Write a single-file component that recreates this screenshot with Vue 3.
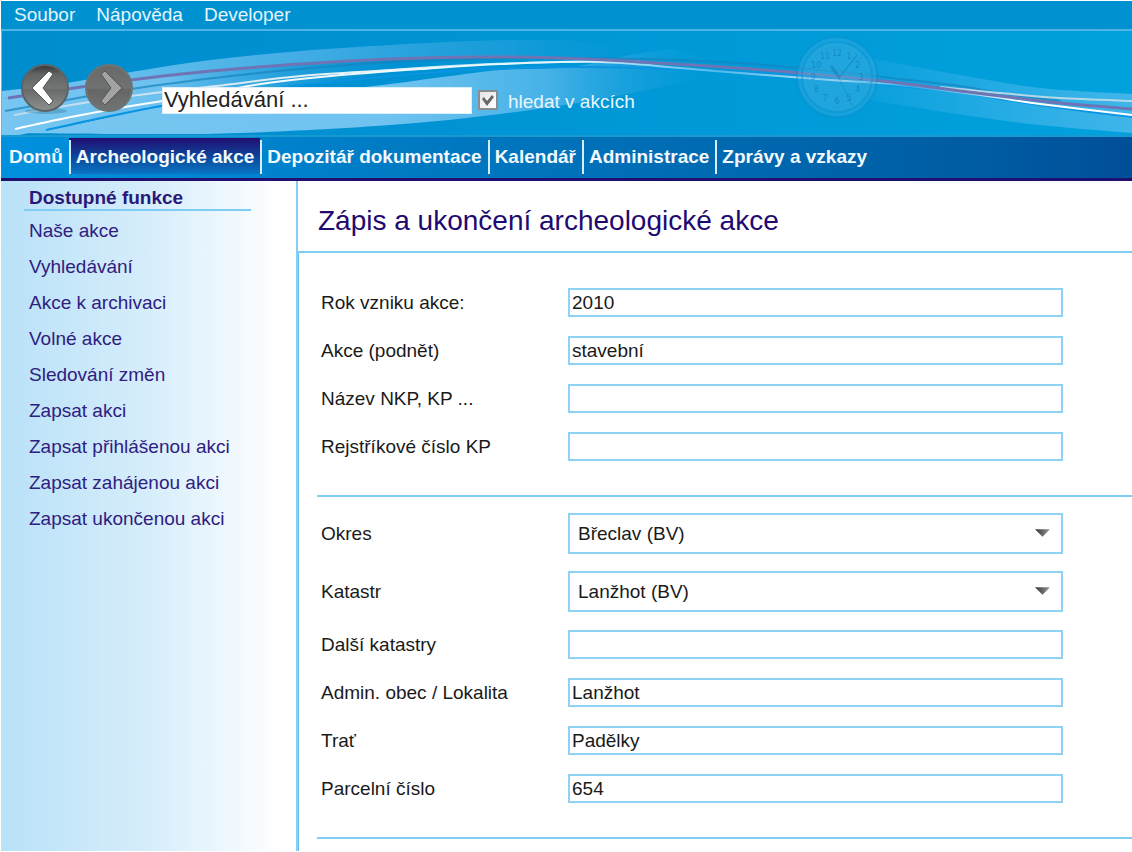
<script setup>
import { ref } from 'vue'

const menu = ['Soubor', 'Nápověda', 'Developer']

const tabs = [
  'Domů',
  'Archeologické akce',
  'Depozitář dokumentace',
  'Kalendář',
  'Administrace',
  'Zprávy a vzkazy',
]
const activeTab = ref('Archeologické akce')

const functions = [
  'Naše akce',
  'Vyhledávání',
  'Akce k archivaci',
  'Volné akce',
  'Sledování změn',
  'Zapsat akci',
  'Zapsat přihlášenou akci',
  'Zapsat zahájenou akci',
  'Zapsat ukončenou akci',
]

const search = ref('Vyhledávání ...')
const searchInEvents = ref(true)

const sections = ref([
  [
    { id: 'rok', label: 'Rok vzniku akce:', value: '2010' },
    { id: 'podnet', label: 'Akce (podnět)', value: 'stavební' },
    { id: 'nazev', label: 'Název NKP, KP ...', value: '' },
    { id: 'rejstrik', label: 'Rejstříkové číslo KP', value: '' },
  ],
  [
    { id: 'okres', label: 'Okres', value: 'Břeclav (BV)', select: true },
    { id: 'katastr', label: 'Katastr', value: 'Lanžhot (BV)', select: true },
    { id: 'dalsi', label: 'Další katastry', value: '' },
    { id: 'obec', label: 'Admin. obec / Lokalita', value: 'Lanžhot' },
    { id: 'trat', label: 'Trať', value: 'Padělky' },
    { id: 'parcela', label: 'Parcelní číslo', value: '654' },
  ],
])

// Smooth curve through a list of points (Catmull-Rom turned into cubic Béziers).
function curve(p, start = 'M') {
  let d = `${start}${p[0][0]} ${p[0][1]}`
  for (let i = 0; i < p.length - 1; i++) {
    const a = p[i - 1] || p[i]
    const b = p[i]
    const c = p[i + 1]
    const e = p[i + 2] || c
    const n = (v) => v.toFixed(1)
    d += `C${n(b[0] + (c[0] - a[0]) / 6)} ${n(b[1] + (c[1] - a[1]) / 6)} ${n(c[0] - (e[0] - b[0]) / 6)} ${n(c[1] - (e[1] - b[1]) / 6)} ${c[0]} ${c[1]}`
  }
  return d
}
const band = (top, bottom) => curve(top) + curve([...bottom].reverse(), 'L') + 'Z'

const purplePts = [[7, 98], [60, 90], [130, 80], [210, 71], [300, 64], [390, 59], [470, 57], [560, 58], [640, 62], [752, 69], [832, 76], [900, 83], [960, 91], [1000, 96], [1060, 103], [1132, 109]]
const bluePts = [[45, 130], [100, 118], [160, 106], [220, 96], [300, 85], [390, 76], [480, 69], [570, 67], [640, 68], [720, 71], [800, 76], [880, 84], [960, 92], [1000, 99], [1060, 108], [1132, 117]]

const purple = curve(purplePts)
const blue = curve(bluePts)
const navy = curve([[4, 111], [60, 101], [130, 89], [230, 76], [310, 68], [390, 62], [480, 59], [560, 58], [640, 59], [700, 61], [752, 64], [830, 71], [900, 79], [960, 86], [1000, 93], [1060, 101]])
const cream = curve([[13, 115], [70, 105], [130, 96], [215, 86], [300, 76], [390, 70], [450, 66], [520, 63], [600, 61], [640, 61]])
const creamRight = curve([[940, 87], [1000, 93], [1060, 98], [1132, 101]])
const white = curve([[14, 129], [70, 117], [130, 106], [200, 95], [260, 84], [330, 76], [420, 69], [500, 64], [600, 62], [680, 68], [752, 74], [830, 80], [890, 84], [980, 95], [1040, 104], [1132, 115]])
const upperBand = band(
  [[1, 91], [60, 84], [130, 72], [210, 60], [300, 51], [390, 45], [470, 41], [540, 40], [640, 43]],
  [[1, 99], [60, 90], [130, 80], [210, 71], [300, 64], [390, 59], [470, 57], [560, 58], [640, 62]],
)
const innerBand = band(
  [[1, 99], [60, 90], [130, 80], [210, 71], [300, 64], [390, 59], [400, 59]],
  [[1, 138], [45, 130], [100, 118], [160, 106], [220, 96], [300, 85], [390, 72], [400, 70]],
)
const lowerBand = band(
  [[1, 130], [45, 130], [100, 119], [160, 107], [250, 98], [320, 92], [390, 84], [450, 76], [500, 70], [570, 67], [630, 55], [670, 49]],
  [[1, 133], [130, 134], [240, 133], [390, 125], [500, 114], [600, 99], [680, 83], [750, 66]],
)
const rightBand = band(
  [[870, 58], [960, 75], [1040, 88], [1132, 94]],
  [[870, 100], [950, 113], [1040, 125], [1132, 133]],
)

const dial = Array.from({ length: 12 }, (_, i) => {
  const t = ((i + 1) * Math.PI) / 6
  return { n: i + 1, x: 41 + 24 * Math.sin(t), y: 42 - 24 * Math.cos(t) }
})
</script>

<template>
  <div class="app">
    <header>
      <nav class="menubar" aria-label="Menu">
        <a v-for="item in menu" :key="item" href="#">{{ item }}</a>
      </nav>

      <div class="banner">
        <svg class="waves" viewBox="1 31 1131 104" preserveAspectRatio="none" aria-hidden="true">
          <defs>
            <linearGradient id="fadeUpper" gradientUnits="userSpaceOnUse" x1="1" x2="640" y1="0" y2="0">
              <stop offset="0" stop-color="#78c6f1" />
              <stop offset="0.2" stop-color="#62bdec" />
              <stop offset="0.5" stop-color="#3eabe3" />
              <stop offset="0.8" stop-color="#1e9fdb" stop-opacity="0.7" />
              <stop offset="1" stop-color="#0e9ad8" stop-opacity="0" />
            </linearGradient>
            <linearGradient id="fadeInner" gradientUnits="userSpaceOnUse" x1="1" x2="400" y1="0" y2="0">
              <stop offset="0" stop-color="#78c6f1" />
              <stop offset="0.4" stop-color="#6dc1ef" />
              <stop offset="1" stop-color="#2aa2df" stop-opacity="0" />
            </linearGradient>
            <linearGradient id="fadeLower" gradientUnits="userSpaceOnUse" x1="1" x2="700" y1="0" y2="0">
              <stop offset="0" stop-color="#78c6f1" />
              <stop offset="0.55" stop-color="#70c3f0" />
              <stop offset="0.78" stop-color="#46b2e7" />
              <stop offset="1" stop-color="#1ea3de" stop-opacity="0" />
            </linearGradient>
            <linearGradient id="fadeRight" gradientUnits="userSpaceOnUse" x1="870" x2="1132" y1="0" y2="0">
              <stop offset="0" stop-color="#40b5ea" stop-opacity="0.15" />
              <stop offset="1" stop-color="#40b5ea" />
            </linearGradient>
            <linearGradient id="creamFade" gradientUnits="userSpaceOnUse" x1="13" x2="640" y1="0" y2="0">
              <stop offset="0" stop-color="#b9dcef" />
              <stop offset="0.6" stop-color="#eef3f4" />
              <stop offset="1" stop-color="#cfe9f8" stop-opacity="0.3" />
            </linearGradient>
            <linearGradient id="whiteFade" gradientUnits="userSpaceOnUse" x1="14" x2="1132" y1="0" y2="0">
              <stop offset="0" stop-color="#fff" />
              <stop offset="0.5" stop-color="#e2f5ff" />
              <stop offset="0.63" stop-color="#9fdcf8" stop-opacity="0.5" />
              <stop offset="0.74" stop-color="#d5e9f5" />
              <stop offset="0.8" stop-color="#9fdcf8" stop-opacity="0.3" />
              <stop offset="0.9" stop-color="#fff" />
              <stop offset="1" stop-color="#fff" />
            </linearGradient>
          </defs>
          <path :d="upperBand" fill="url(#fadeUpper)" />
          <path :d="innerBand" fill="url(#fadeInner)" />
          <path :d="lowerBand" fill="url(#fadeLower)" />
          <path :d="rightBand" fill="url(#fadeRight)" />
          <g fill="none">
            <path :d="navy" stroke="#1583bd" stroke-width="2" opacity="0.7" />
            <path :d="blue" stroke="#0a95e2" stroke-width="2" />
            <path :d="cream" stroke="url(#creamFade)" stroke-width="2" />
            <path :d="creamRight" stroke="#b5d8e6" stroke-width="2" />
            <path :d="white" stroke="url(#whiteFade)" stroke-width="2" />
            <path :d="purple" stroke="#6f74b4" stroke-width="3" />
          </g>
        </svg>

        <svg class="clock" viewBox="0 0 82 84" aria-hidden="true">
          <circle cx="41" cy="42" r="40" fill="#49b3e6" fill-opacity="0.3" stroke="#0a86c6" stroke-opacity="0.35" stroke-width="2" />
          <circle cx="41" cy="42" r="35" fill="#49b3e6" fill-opacity="0.2" stroke="#0a86c6" stroke-opacity="0.35" stroke-width="2" />
          <circle cx="41" cy="42" r="30" fill="none" stroke="#0a86c6" stroke-opacity="0.25" stroke-dasharray="1 2" />
          <text v-for="d in dial" :key="d.n" :x="d.x" :y="d.y + 3">{{ d.n }}</text>
          <path d="M43 43 61 20" stroke="#0870aa" stroke-opacity="0.6" stroke-width="1" />
          <path d="M43 42 35 31" stroke="#0870aa" stroke-opacity="0.35" stroke-width="3" />
          <path d="M43 43 56 71" stroke="#0870aa" stroke-opacity="0.3" stroke-width="1" />
        </svg>

        <div class="history">
          <button type="button" aria-label="Zpět">
            <svg viewBox="0 0 48 52" aria-hidden="true">
              <defs>
                <linearGradient id="ball" x1="0" x2="0" y1="0" y2="1">
                  <stop offset="0" stop-color="#333" />
                  <stop offset="0.2" stop-color="#626463" />
                  <stop offset="0.5" stop-color="#747675" />
                  <stop offset="0.54" stop-color="#696b6a" />
                  <stop offset="1" stop-color="#8f9190" />
                </linearGradient>
              </defs>
              <ellipse cx="25" cy="47" rx="21" ry="3" fill="#357ca0" opacity="0.4" />
              <circle cx="24" cy="24" r="23" fill="url(#ball)" stroke="#5c6468" stroke-width="2" />
              <path d="M28 7 32 10 22 24 32 37 28 41 11 24Z" fill="#fff" stroke="#555" stroke-width="1" stroke-linejoin="round" />
            </svg>
          </button>
          <button type="button" aria-label="Vpřed">
            <svg viewBox="0 0 48 52" aria-hidden="true">
              <defs>
                <linearGradient id="ballDim" x1="0" x2="0" y1="0" y2="1">
                  <stop offset="0" stop-color="#676969" />
                  <stop offset="0.5" stop-color="#707271" />
                  <stop offset="0.54" stop-color="#656766" />
                  <stop offset="1" stop-color="#727473" />
                </linearGradient>
              </defs>
              <circle cx="24" cy="24" r="23" fill="url(#ballDim)" stroke="#6c7476" stroke-width="2" />
              <path d="M20 7 16 10 26 24 16 37 20 41 37 24Z" fill="#a3a3a3" stroke="#555" stroke-width="1" stroke-linejoin="round" />
            </svg>
          </button>
        </div>

        <form class="search" @submit.prevent>
          <input v-model="search" type="text" class="query" aria-label="Vyhledávání" />
          <label class="check">
            <span class="tick">
              <input v-model="searchInEvents" type="checkbox" />
              <svg v-if="searchInEvents" viewBox="0 0 20 20" aria-hidden="true">
                <path d="M4 9 6 7 9 11 14 5 16 7 9 16Z" fill="#666" />
              </svg>
            </span>
            <span class="caption">hledat v akcích</span>
          </label>
        </form>
      </div>

      <nav class="tabs" aria-label="Hlavní navigace">
        <a
          v-for="tab in tabs"
          :key="tab"
          href="#"
          :class="{ active: tab === activeTab }"
          @click.prevent="activeTab = tab"
        >{{ tab }}</a>
      </nav>
    </header>

    <div class="body">
      <aside>
        <h2>Dostupné funkce</h2>
        <ul>
          <li v-for="item in functions" :key="item"><a href="#">{{ item }}</a></li>
        </ul>
      </aside>

      <main>
        <h1>Zápis a ukončení archeologické akce</h1>
        <form class="sheet" @submit.prevent>
          <section v-for="(fields, i) in sections" :key="i">
            <div v-for="field in fields" :key="field.id" class="row">
              <label :for="field.id">{{ field.label }}</label>
              <span v-if="field.select" class="select">
                <select :id="field.id" v-model="field.value">
                  <option>{{ field.value }}</option>
                </select>
                <svg viewBox="0 0 16 8" aria-hidden="true">
                  <defs>
                    <linearGradient id="arrow" x1="0" x2="1" y1="0" y2="0">
                      <stop offset="0" stop-color="#333" />
                      <stop offset="1" stop-color="#999" />
                    </linearGradient>
                  </defs>
                  <path d="M0 0H16L8 8Z" fill="url(#arrow)" />
                </svg>
              </span>
              <input v-else :id="field.id" v-model="field.value" type="text" />
            </div>
          </section>
        </form>
      </main>
    </div>
  </div>
</template>

<style>
body {
  background: #fff;
}
</style>

<style scoped>
.app {
  display: flex;
  flex-direction: column;
  box-sizing: border-box;
  min-height: 100vh;
  padding: 1px 0 1px 1px;
  background: #fff;
  color: #1a1a1a;
  font-family: "Liberation Sans", Arial, sans-serif;
  font-size: 19px;
}
a {
  color: inherit;
  text-decoration: none;
}
input,
select {
  box-sizing: border-box;
  margin: 0;
  color: inherit;
  font: inherit;
}

.menubar {
  display: flex;
  gap: 21px;
  padding: 0 13px;
  border-bottom: 2px solid #4db4e3;
  background: #0092d0;
  color: #e3f5ff;
  line-height: 28px;
}

.banner {
  position: relative;
  display: flex;
  align-items: center;
  gap: 29px;
  box-sizing: border-box;
  height: 104px;
  padding: 14px 19px 0;
  border-left: 1px solid #5cbce8;
  background: linear-gradient(90deg, #008dce, #0091d2 30%, #0099d8 60%, #00a1dd);
}
.waves {
  position: absolute;
  inset: 0;
  width: 100%;
  height: 100%;
}
.clock {
  position: absolute;
  top: 4px;
  left: 70%;
  width: 82px;
  height: 84px;
  margin-left: 3px;
}
.clock text {
  fill: #0870aa;
  fill-opacity: 0.55;
  font-family: "DejaVu Sans", sans-serif;
  font-size: 8px;
  text-anchor: middle;
}
.history {
  position: relative;
  display: flex;
  gap: 16px;
}
.history button {
  width: 48px;
  height: 52px;
  padding: 0;
  border: 0;
  background: none;
}
.history svg {
  display: block;
}
.search {
  position: relative;
  display: flex;
  align-items: center;
  gap: 6px;
  padding-top: 20px;
}
.query {
  width: 310px;
  height: 27px;
  padding: 0 1px;
  border: 1px solid #d9effb;
  background: #fff;
  color: #222;
  font-size: 22px;
}
.check {
  display: flex;
  align-items: center;
  gap: 10px;
  color: #e8f7ff;
}
.caption {
  padding-top: 4px;
}
.tick {
  position: relative;
  display: block;
  width: 20px;
  height: 20px;
}
.tick input {
  display: block;
  width: 20px;
  height: 20px;
  border: 2px solid #8a8d90;
  background: linear-gradient(135deg, #e4e4e4, #fff);
  appearance: none;
}
.tick svg {
  position: absolute;
  inset: 0;
  pointer-events: none;
}

.tabs {
  display: flex;
  padding: 3px 0 4px;
  border-top: 2px solid #1a98d0;
  border-bottom: 3px solid #1f0f70;
  background: linear-gradient(90deg, #0091de, #007bc4 35%, #0067ae 68%, #005ba2 88%, #004f98);
  color: #f2faff;
  font-weight: bold;
  line-height: 34px;
}
.tabs a {
  padding: 0 6px 0 5px;
  border-left: 2px solid #d5ecfa;
}
.tabs a:first-child {
  padding-left: 6px;
  border-left-color: transparent;
}
.tabs a.active {
  background: linear-gradient(#1f1478, #0a4c9e 55%, #0a74c4);
  box-shadow: 0 -2px #24106f;
}

.body {
  display: flex;
  flex: 1;
}
aside {
  box-sizing: border-box;
  flex: 0 0 295px;
  background: linear-gradient(90deg, #b9e1f8, #d6edfb 50%, #fff 95%);
  color: #2f2080;
}
aside h2 {
  margin: 0 45px 2px 23px;
  padding: 6px 0 0 5px;
  border-bottom: 2px solid #80cdf3;
  color: #2a1878;
  font-size: 19px;
  line-height: 22px;
}
aside ul {
  margin: 0;
  padding: 0 0 0 28px;
  list-style: none;
}
aside li {
  line-height: 36px;
}

main {
  display: flex;
  flex: 1;
  flex-direction: column;
  border-left: 2px solid #85cff4;
}
h1 {
  margin: 0;
  padding: 10px 20px 0;
  border-bottom: 2px solid #80cdf3;
  color: #1e0a70;
  font-size: 28px;
  font-weight: normal;
  line-height: 60px;
}
.sheet {
  flex: 1;
  border-left: 1px solid #6cc2f0;
}
section {
  display: flex;
  flex-direction: column;
  gap: 17px;
  margin-left: 18px;
  padding: 16px 69px 33px 4px;
  border-bottom: 2px solid #80cdf3;
}
section:first-child {
  padding-top: 34px;
}
.row {
  display: grid;
  grid-template-columns: 247px 1fr;
  align-items: center;
  min-height: 31px;
}
.row > input {
  width: 100%;
  height: 29px;
  padding: 0 2px;
  border: 2px solid #8fd2f5;
  background: #fff;
}
.select {
  position: relative;
  display: block;
}
.select select {
  display: block;
  width: 100%;
  height: 41px;
  padding: 0 30px 0 8px;
  border: 2px solid #8fd2f5;
  border-radius: 0;
  background: #fff;
  appearance: none;
}
.select svg {
  position: absolute;
  top: 16px;
  right: 13px;
  width: 15px;
  height: 8px;
  pointer-events: none;
}
</style>
